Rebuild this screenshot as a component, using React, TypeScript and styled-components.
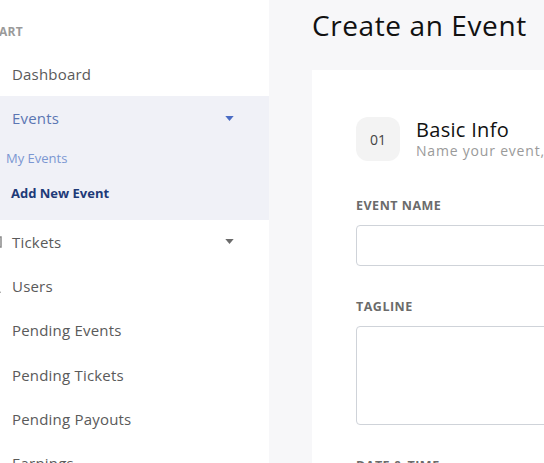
import React from 'react';
import styled, { createGlobalStyle } from 'styled-components';

const GlobalStyle = createGlobalStyle`
  html, body {
    margin: 0;
    padding: 0;
    height: 100%;
    overflow: hidden;
    font-family: "Open Sans", "DejaVu Sans", sans-serif;
  }
  #root { height: 100%; }
`;

const menu = [
  { label: 'Dashboard' },
  { label: 'Events', open: true, children: [
    { label: 'My Events', indent: 6 },
    { label: 'Add New Event', indent: 11, active: true },
  ] },
  { label: 'Tickets', caret: true, icon: 'ticket' },
  { label: 'Users', icon: 'user' },
  { label: 'Pending Events' },
  { label: 'Pending Tickets' },
  { label: 'Pending Payouts' },
  { label: 'Earnings' },
];

function Caret({ open }: { open?: boolean }) {
  return (
    <CaretIcon viewBox="0 0 10 6" $open={open}>
      <path d="M0 0 H10 L5 6 Z" />
    </CaretIcon>
  );
}

function App() {
  return (
    <>
      <GlobalStyle />
      <Layout>
        <Sidebar>
          <SectionTitle>ART</SectionTitle>
          <MenuList>
            {menu.map((item) => (
              <MenuGroup key={item.label} $open={item.open}>
                <MenuItem $open={item.open}>
                  {item.icon === 'ticket' && (
                    <EdgeIcon viewBox="0 0 16 16">
                      <path d="M1 3 H15 V13 H1 Z" />
                    </EdgeIcon>
                  )}
                  {item.icon === 'user' && (
                    <EdgeIcon viewBox="0 0 16 16">
                      <path d="M2 15 C2 11 14 11 14 15" />
                    </EdgeIcon>
                  )}
                  <span>{item.label}</span>
                  {(item.open || item.caret) && <Caret open={item.open} />}
                </MenuItem>
                {item.children && (
                  <SubList>
                    {item.children.map((c) => (
                      <SubItem key={c.label} $indent={c.indent} $active={c.active}>
                        {c.label}
                      </SubItem>
                    ))}
                  </SubList>
                )}
              </MenuGroup>
            ))}
          </MenuList>
        </Sidebar>
        <Main>
          <PageTitle>Create an Event</PageTitle>
          <Card>
            <StepHeader>
              <StepBadge>01</StepBadge>
              <StepText>
                <StepTitle>Basic Info</StepTitle>
                <StepSub>Name your event, tell event-goers why they should come</StepSub>
              </StepText>
            </StepHeader>
            <Field>
              <Label>EVENT NAME</Label>
              <Input type="text" />
            </Field>
            <Field>
              <Label>TAGLINE</Label>
              <TextArea />
            </Field>
            <Field>
              <Label>DATE &amp; TIME</Label>
            </Field>
          </Card>
        </Main>
      </Layout>
    </>
  );
}

export default App;

const Layout = styled.div`
  display: flex;
  height: 100%;
`;

const Sidebar = styled.aside`
  width: 269px;
  flex-shrink: 0;
  background: #fff;
  overflow: hidden;
  padding-top: 23px;
`;

const SectionTitle = styled.div`
  font-size: 12px;
  font-weight: 700;
  color: #9a9a9a;
  letter-spacing: 0.3px;
  margin-left: -1px;
  height: 17px;
`;

const MenuList = styled.ul`
  list-style: none;
  margin: 0;
  padding: 0;
  margin-top: 12px;
`;

const MenuGroup = styled.li<{ $open?: boolean }>`
  background: ${(p) => (p.$open ? '#f0f1f7' : 'transparent')};
  padding-bottom: ${(p) => (p.$open ? '9px' : '0')};
`;

const MenuItem = styled.div<{ $open?: boolean }>`
  display: flex;
  align-items: center;
  height: 44.3px;
  padding-left: 12px;
  padding-right: 35px;
  font-size: 15px;
  letter-spacing: 0.2px;
  color: ${(p) => (p.$open ? '#5b76b3' : '#5a5a5a')};
  position: relative;

  span {
    flex: 1;
  }
`;

const EdgeIcon = styled.svg`
  position: absolute;
  left: -14px;
  width: 16px;
  height: 16px;
  fill: none;
  stroke: #8a8a8a;
  stroke-width: 1.5;
`;

const CaretIcon = styled.svg<{ $open?: boolean }>`
  width: 9px;
  height: 5px;
  fill: ${(p) => (p.$open ? '#4a6cc4' : '#6b6b6b')};
`;

const SubList = styled.div`
  display: flex;
  flex-direction: column;
`;

const SubItem = styled.div<{ $indent: number; $active?: boolean }>`
  height: 35px;
  display: flex;
  align-items: center;
  padding-left: ${(p) => p.$indent}px;
  font-size: 13px;
  font-weight: ${(p) => (p.$active ? 700 : 400)};
  color: ${(p) => (p.$active ? '#1e3a78' : '#7b97d2')};
`;

const Main = styled.main`
  flex: 1;
  background: #f7f7f9;
  padding-left: 43px;
  overflow: hidden;
`;

const PageTitle = styled.h1`
  margin: 0;
  padding-top: 6px;
  height: 70px;
  box-sizing: border-box;
  font-size: 28px;
  letter-spacing: 0.6px;
  font-weight: 400;
  color: #111;
  white-space: nowrap;
`;

const Card = styled.section`
  background: #fff;
  width: 600px;
  padding: 47px 0 0 44px;
  min-height: 500px;
`;

const StepHeader = styled.div`
  display: flex;
  align-items: center;
  gap: 16px;
  margin-bottom: 36px;
`;

const StepBadge = styled.div`
  width: 44px;
  height: 44px;
  border-radius: 12px;
  background: #f3f3f3;
  display: flex;
  align-items: center;
  justify-content: center;
  font-size: 14px;
  color: #444;
`;

const StepText = styled.div`
  display: flex;
  flex-direction: column;
  white-space: nowrap;
`;

const StepTitle = styled.div`
  font-size: 20px;
  color: #111;
  line-height: 24px;
  letter-spacing: 0.3px;
`;

const StepSub = styled.div`
  font-size: 14px;
  color: #9a9a9a;
  line-height: 18px;
  letter-spacing: 0.8px;
`;

const Field = styled.div`
  display: flex;
  flex-direction: column;
  margin-bottom: 32px;
`;

const Label = styled.label`
  font-size: 12.5px;
  font-weight: 700;
  color: #6b6b6b;
  margin-bottom: 11px;
  letter-spacing: 0.5px;
`;

const Input = styled.input`
  width: 400px;
  height: 41px;
  box-sizing: border-box;
  border: 1px solid #cfd3d9;
  border-radius: 4px;
  outline: none;
`;

const TextArea = styled.textarea`
  width: 400px;
  height: 99px;
  box-sizing: border-box;
  border: 1px solid #cfd3d9;
  border-radius: 4px;
  resize: none;
  outline: none;
`;
